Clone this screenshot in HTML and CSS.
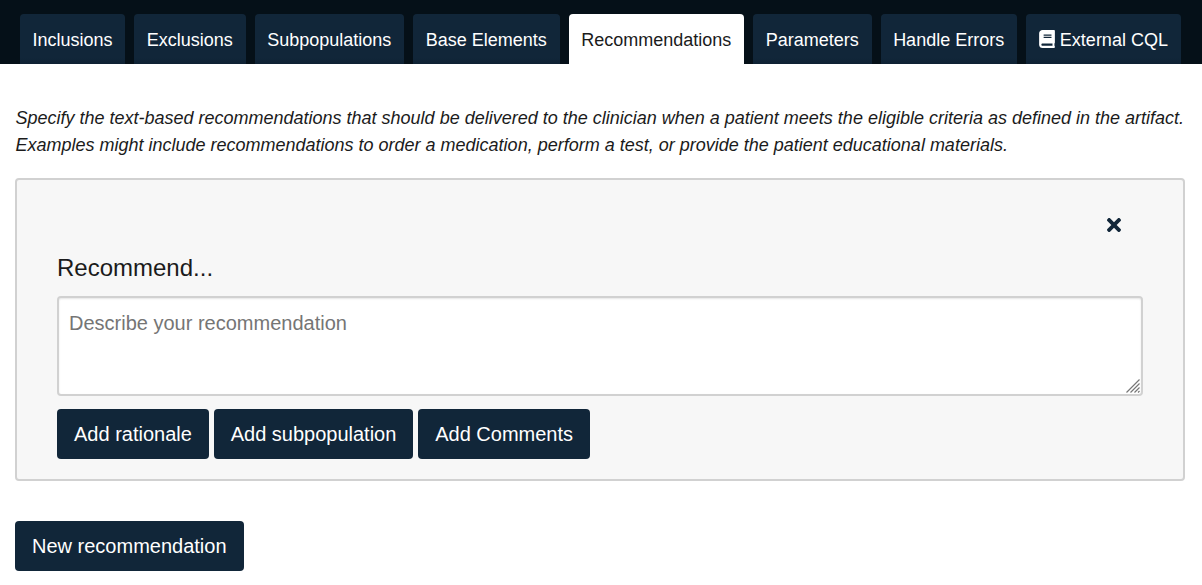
FILE: index.html
```html
<!DOCTYPE html>
<html lang="en">
<head>
<meta charset="utf-8">
<title>Recommendations</title>
<link rel="stylesheet" href="styles.css">
</head>
<body>
<nav class="tabs">
  <a class="tab">Inclusions</a>
  <a class="tab">Exclusions</a>
  <a class="tab">Subpopulations</a>
  <a class="tab">Base Elements</a>
  <a class="tab tab-active">Recommendations</a>
  <a class="tab">Parameters</a>
  <a class="tab">Handle Errors</a>
  <a class="tab"><svg class="book" viewBox="0 0 448 512"><path fill="currentColor" d="M448 360V24c0-13.300-10.700-24-24-24H96C43 0 0 43 0 96v320c0 53 43 96 96 96h328c13.300 0 24-10.700 24-24v-16c0-7.500-3.500-14.300-8.900-18.700-4.200-15.400-4.200-59.300 0-74.700 5.400-4.300 8.900-11.100 8.900-18.600zM128 134c0-3.300 2.700-6 6-6h212c3.300 0 6 2.700 6 6v20c0 3.300-2.700 6-6 6H134c-3.300 0-6-2.700-6-6v-20zm0 64c0-3.300 2.700-6 6-6h212c3.300 0 6 2.700 6 6v20c0 3.300-2.700 6-6 6H134c-3.300 0-6-2.700-6-6v-20zm253.400 250H96c-17.700 0-32-14.300-32-32 0-17.600 14.400-32 32-32h285.400c-1.900 17.100-1.900 46.900 0 64z"/></svg>External CQL</a>
</nav>
<main class="content">
  <p class="intro">Specify the text-based recommendations that should be delivered to the clinician when a patient meets the eligible criteria as defined in the artifact. Examples might include recommendations to order a medication, perform a test, or provide the patient educational materials.</p>
  <section class="card">
    <button class="close" aria-label="Remove"><svg class="close-icon" viewBox="0 0 352 352"><path fill="currentColor" d="M242.720 176l100.070-100.070c12.280-12.280 12.280-32.190 0-44.480l-22.240-22.240c-12.280-12.280-32.190-12.280-44.480 0L176 109.280 75.930 9.210c-12.280-12.280-32.190-12.280-44.480 0L9.210 31.450c-12.280 12.280-12.280 32.190 0 44.480L109.280 176 9.210 276.070c-12.280 12.280-12.280 32.190 0 44.480l22.240 22.240c12.280 12.280 32.200 12.280 44.480 0L176 242.720l100.070 100.070c12.280 12.280 32.200 12.280 44.480 0l22.240-22.240c12.280-12.280 12.280-32.190 0-44.480L242.720 176z"/></svg></button>
    <h2 class="heading">Recommend...</h2>
    <div class="field-wrap">
      <textarea class="field" placeholder="Describe your recommendation"></textarea>
      <svg class="grip" viewBox="0 0 14 14"><path d="M.5 13.500L13.500.5M4.500 13.500l9-9M8.500 13.500l5-5M12 13.500l1.500-1.500"/></svg>
    </div>
    <div class="actions">
      <button class="button">Add rationale</button>
      <button class="button">Add subpopulation</button>
      <button class="button">Add Comments</button>
    </div>
  </section>
  <button class="button">New recommendation</button>
</main>
</body>
</html>
```

FILE: styles.css
```css
* { box-sizing: border-box; }

body {
  margin: 0;
  background: #fff;
  color: #1b1b1b;
  font-family: "Liberation Sans", Arial, sans-serif;
  font-size: 18px;
}

.tabs {
  display: flex;
  gap: 9px;
  height: 64px;
  padding: 14px 20px 0;
  background: #051018;
}

.tab {
  display: flex;
  align-items: center;
  padding: 2px 13px 0 12.4px;
  border-radius: 4px 4px 0 0;
  background: linear-gradient(#112639 44px, #0e2133);
  color: #fff;
  white-space: nowrap;
}

.tab-active {
  background: #fff;
  color: #1b1b1b;
}

.book {
  width: 16px;
  height: 18px;
  margin: 0 5px 3px .3px;
}

.content { padding: 41px 15px 0; }

.intro {
  margin: 0 -2px 19px 0;
  padding-left: .4px;
  font-style: italic;
  line-height: 27px;
}

.card {
  display: flex;
  flex-direction: column;
  width: 1170px;
  height: 303px;
  margin-bottom: 40px;
  padding: 36px 40px 20px;
  border: 2px solid #d1d1d1;
  border-radius: 4px;
  background: #f7f7f7;
}

.close {
  align-self: flex-end;
  display: flex;
  margin-right: 21px;
  padding: 2px 1px;
  border: 0;
  background: none;
  color: #112639;
}

.close-icon { width: 14px; height: 14px; }

.heading {
  margin: 18px 0 13px;
  font-size: 24px;
  font-weight: 400;
  line-height: 31px;
}

.field-wrap {
  position: relative;
  flex: none;
  height: 100px;
  margin-bottom: 13px;
}

.field {
  display: block;
  width: 100%;
  height: 100%;
  padding: 10px;
  border: 2px solid #d1d1d1;
  border-radius: 4px;
  box-shadow: inset 0 1px 2px #e6e6e6;
  font: 20px/30px "Liberation Sans", Arial, sans-serif;
  resize: none;
}

.field::placeholder { color: #757575; }

.grip {
  position: absolute;
  right: 3px;
  bottom: 3px;
  width: 14px;
  height: 14px;
  fill: none;
  stroke: #777;
  stroke-width: 1.2;
  pointer-events: none;
}

.actions { display: flex; gap: 4.8px; }

.button {
  height: 50px;
  padding: 0 17px;
  border: 0;
  border-radius: 4px;
  background: #112639;
  color: #fff;
  font: 20px "Liberation Sans", Arial, sans-serif;
}
```
